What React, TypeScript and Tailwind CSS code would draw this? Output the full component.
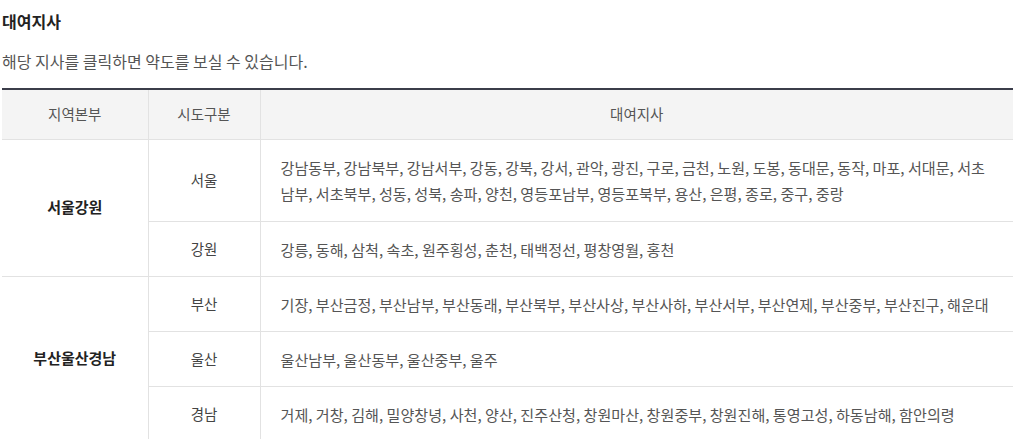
const GROUPS = [
  {
    region: "서울강원",
    rows: [
      {
        city: "서울",
        tall: true,
        branches:
          "강남동부, 강남북부, 강남서부, 강동, 강북, 강서, 관악, 광진, 구로, 금천, 노원, 도봉, 동대문, 동작, 마포, 서대문, 서초남부, 서초북부, 성동, 성북, 송파, 양천, 영등포남부, 영등포북부, 용산, 은평, 종로, 중구, 중랑",
      },
      { city: "강원", branches: "강릉, 동해, 삼척, 속초, 원주횡성, 춘천, 태백정선, 평창영월, 홍천" },
    ],
  },
  {
    region: "부산울산경남",
    rows: [
      {
        city: "부산",
        branches:
          "기장, 부산금정, 부산남부, 부산동래, 부산북부, 부산사상, 부산사하, 부산서부, 부산연제, 부산중부, 부산진구, 해운대",
      },
      { city: "울산", branches: "울산남부, 울산동부, 울산중부, 울주" },
      {
        city: "경남",
        branches:
          "거제, 거창, 김해, 밀양창녕, 사천, 양산, 진주산청, 창원마산, 창원중부, 창원진해, 통영고성, 하동남해, 함안의령",
      },
    ],
  },
];

export default function App() {
  return (
    <div className="w-[1020px] bg-white pl-[2px] pr-[7px] pt-[10px] font-['Noto_Sans_CJK_KR','Noto_Sans',sans-serif] text-[#555]">
      {/* Header */}
      <h2 className="text-[16px] font-bold leading-[22px] text-[#222]">대여지사</h2>
      <p className="mt-[18px] text-[16px] leading-[22px] text-[#555]">
        해당 지사를 클릭하면 약도를 보실 수 있습니다.
      </p>

      {/* Table */}
      <table className="mt-[16px] w-full border-collapse border-t-2 border-[#3b3d4a] text-[14.5px]">
        <colgroup>
          <col className="w-[146px]" />
          <col className="w-[112px]" />
          <col />
        </colgroup>
        <thead>
          <tr className="h-[50px] bg-[#f4f4f4]">
            <th className="border-b border-r border-[#e2e2e2] font-normal text-[#555]">지역본부</th>
            <th className="border-b border-r border-[#e2e2e2] font-normal text-[#555]">시도구분</th>
            <th className="border-b border-[#e2e2e2] font-normal text-[#555]">대여지사</th>
          </tr>
        </thead>
        <tbody>
          {GROUPS.map((g) =>
            g.rows.map((r, i) => (
              <tr key={g.region + r.city} className={r.tall ? "h-[82px]" : "h-[55px]"}>
                {i === 0 && (
                  <td
                    rowSpan={g.rows.length}
                    className="border-b border-r border-[#e2e2e2] text-center text-[15px] font-bold text-[#222]"
                  >
                    {g.region}
                  </td>
                )}
                <td className="border-b border-r border-[#e2e2e2] text-center text-[#444]">{r.city}</td>
                <td className="border-b border-[#e2e2e2] py-[12px] pl-[20px] pr-[20px] text-[15.1px] leading-[26px]">
                  {r.branches}
                </td>
              </tr>
            ))
          )}
        </tbody>
      </table>
    </div>
  );
}
